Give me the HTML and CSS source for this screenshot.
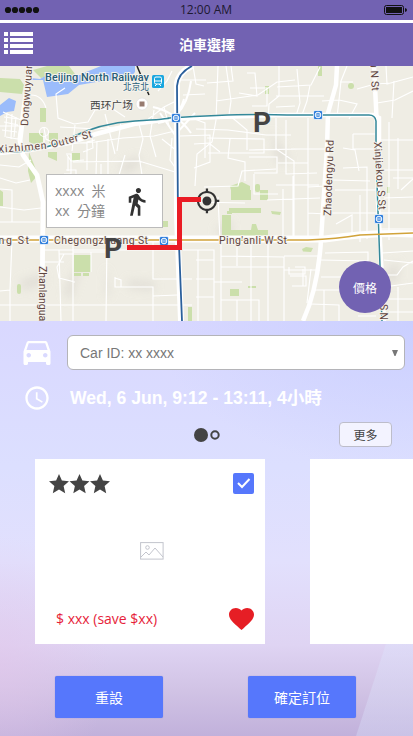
FILE: index.html
```html
<!DOCTYPE html>
<html lang="zh-Hant">
<head>
<meta charset="utf-8">
<title>泊車選擇</title>
<link rel="stylesheet" href="styles.css">
</head>
<body>
<div class="status">
  <svg class="signal" width="36" height="8" viewBox="0 0 36 8"><circle cx="4" cy="4" r="3.1"/><circle cx="11" cy="4" r="3.1"/><circle cx="18" cy="4" r="3.1"/><circle cx="25" cy="4" r="3.1"/><circle cx="32" cy="4" r="3.1"/></svg>
  <span>12:00 AM</span>
  <svg class="battery" width="24" height="10" viewBox="0 0 24 10"><rect x=".5" y=".5" width="19" height="9" rx="2" fill="none" stroke="#111"/><rect x="2" y="2" width="16" height="6"/><path d="M21 3q2 .4 2 2t-2 2z"/></svg>
</div>
<header class="nav">
  <svg class="menu" width="29" height="22" viewBox="0 0 29 22" fill="#fff"><path d="M0 0h4v4H0zM6 0h23v4H6zM0 6h4v4H0zM6 6h23v4H6zM0 12h4v4H0zM6 12h23v4H6zM0 18h4v4H0zM6 18h23v4H6z"/></svg>
  <h1>泊車選擇</h1>
</header>
<section class="map">
  <svg class="map-art" width="413" height="255" viewBox="0 66 413 255">
    <defs>
      <filter id="soft" x="-50%" y="-50%" width="200%" height="200%"><feGaussianBlur stdDeviation="5"/></filter>
      <g id="metro"><rect x="-4.5" y="-4.5" width="9" height="9" rx="1.5" fill="#2d7ddb" stroke="#fff" stroke-width=".7"/><circle r="2.8" fill="none" stroke="#fff"/><path d="M-1 -1.5v3M1 -1.5v3" stroke="#fff" stroke-width=".9"/></g>
    </defs>
    <rect y="66" width="413" height="255" fill="#efede4"/>
    <g filter="url(#soft)" fill="#d9d6cf" opacity=".65">
      <path d="M118 166l22-11v10l-15 9zM20 281l24-7v10l-22 6zM64 291l14-26 2 6-10 30zM106 265l4 28-4 6zM127 280l28 2v8l-26-2zM155 120l12-9v14z"/>
      <path d="M215 230l16-10v20zM270 130l20 30-12 4zM380 280l18-20v22z"/>
    </g>
    <g fill="#cbdfab">
      <path d="M0 78l20 1 4 6-2 9-22-2zM33 70l14-4h22l6 8-8 5-12-5-14 4zM56 66h12l2 8-8 3zM76 130h0zM29 133h14v9q-6 4-14 0zM49 133h9v10h-9zM29 152l9 23-7 8-3-12zM48 152h9v9l-9-4zM40 108h6v14h-6zM0 190l3 2v14H0z"/>
      <path d="M72 153h8v8h-8zM74 255h17v17H74zM74 273h7v3h-7zM83 273h6v3h-6zM163 221h5v6h-5zM188 307h4v14h-4z"/>
      <rect x="17" y="284" width="4" height="10" rx="2"/>
      <path d="M265 86h4v8h-4zM318 66h4v10h-4zM230 186l12-4 8 4v9h-18zM231 190h20v10h-20zM260 190h8v10h-8zM222 215h9v15h20l1-6 4 0 2 6h10v12h-46zM229 208h32v5h-32zM227 211h5v3h-5zM271 211l10 1-1 3-8-1zM302 249l4-2 7 1-2 4-8-.5zM230 289h9v7h-9zM248 286h8v2h-8zM387 187h3v6h-3z"/>
      <circle cx="351" cy="86" r="3"/><rect x="255" y="184" width="5" height="8" rx="2"/>
    </g>
    <path d="M31 78l9 1 7-4h34l5-3 15-6h34v6l-8 9-19-1-29 5-11 9-21 3-4-17-12 0zM0 105l9-7 7 3-2 10-7 1-7 4z" fill="#9bbcfb"/>
    <g fill="none" stroke="#fff" stroke-width="1.15">
      <path d="M3 112l18 8-3 19-12-2M4 117l15 2M4 122l14 3M2 130l15 2M0 126h20M7 113l-2 24M12 114l-1 25M16 117l-2 20M0 165l19 2 12-7M0 178l16 5 14-3M0 207l24 3 17-2M0 222h40M0 189l12 1v32M12 240l-2 50-10 1M10 290v31M0 305h192M44 250h133M59 250l2 71M44 262h20M64 254l-7 13 2 11 16 4M59 254h15M73 240v81M73 252h32M91 252v20M107 240l-1 81M115 277v10h38v34M153 240v39h39M115 278l6 2v7M153 296l24-1"/>
      <path d="M65 88l-9 6 2 24 16 6 14-2 7-12 18-1 12 8M60 127l37 2 45-5 22-17 14-7M64 144l31-2 28-4 31-2 21-5M44 128l2 11 14 7M75 125l-3 26M91 127l2 21-10 4M105 114l10 40M121 122l-4 29M139 124l4 15-4 16 3 20M154 110l-4 26 6 21M87 170v-28l8-2M97 141l-1 34M108 139v37M125 155l-6 20M73 162l66-1 36 11M67 175h34v-11M66 170h10v6M67 155l4 6 13-1M46 108q-4-13-15-13M164 107l5 19M158 91l9-10 5-10M162 139l15 12M172 138l-2 22 9 13M180 136l30-1v27l-16 6M192 118l13 5v35M194 144l15-1 11 9"/>
      <circle cx="44" cy="132" r="4.5"/><path d="M44 136v9M66 154h5v20h-7M68 157v14"/>
      <path d="M193 66l3 18 8 2M218 66l-2 54-4 22-15 12-2 32M181 80h25M183 95l22-1M207 83l26-2-2-15M216 101l42-6 19-13 18-2M226 66l5 35-2 14 18 15v20M247 73h8l2 23-18-3M279 66v30l-10 8-1 20M250 88h17v18h-15M277 87l34-2 9-18M297 69l3 34-4 13M310 85l-3 16-5 14M276 107l19-1M276 96h48M322 101l17-1 18 4-8 15M339 100l-2 17M340 82l13 0M347 66l-6 15-2 19M357 89l18-5 16-1M386 66l1 18 26-7M377 103l18-3 18-9M394 81l-2 37"/>
      <path d="M196 129l32 1 38 5h25M207 138l57 1v14h-56M230 139l-2 19 17 4v19M249 150l52-1M249 157h28v16h-23M276 118v31l18 12v79M286 120v54l31-1M291 149h35M308 118v122M278 163h30M204 187l34-1 4-15 34-2M195 202l50 1M218 197l2 43M254 174v20h24M276 185h43M267 200l53-2M283 189v51M293 176v64M308 213l18 1M308 187l18-1M353 134l23 0v15h-23v-15M343 148l12 2 4 21M343 168l24-1v72M333 180l37 1M335 190h43M328 213h50M336 224l16-9v23M360 195v47M389 122v118M380 140h33M382 170h31M393 178h20M384 198l29-1M381 213h32M398 138v51M401 190l12-11M381 229h32"/>
      <path d="M183 250h31v71M221 242v79M221 256l63 1v64M237 241v25M251 241v80M268 241v80M284 256h37M221 267h63M284 270h36M214 282h28M221 300h38v21M237 300v21M196 260h18M196 279h18M196 297h18M198 250v71M295 267h10v7h-16v-7M290 276h16v10h-14M303 269v17M311 269l-4 34M325 253l43-1v25M321 260l47 1M321 277h24M315 290h24M311 304l28 1v16M324 290v31M382 253l31-2M384 260l29 3M384 275l13 0 6-8 10-6M391 286l22-3M389 299h24M398 287v34M389 312h24M358 316h18"/>
    </g>
    <g fill="none" stroke="#fff">
      <path d="M30 66l-6 41-4 34 3 14 14 20 6 27-1 119" stroke-width="4.8"/>
      <path d="M0 153l30-3 39-7 27-9 38-10 35-5q60-3 118-4l86 0 6 3 0 57" stroke-width="4.5"/>
      <path d="M192 66q-13 6-15 17v133l4 105" stroke-width="6"/>
      <path d="M337 66l-1 19-8 28-1 35-6 92q-3 48-18 81" stroke-width="4.5"/>
      <path d="M374 66l3 61 1 75 6 119" stroke-width="4.5"/>
      <path d="M0 239h325q50-7 88-5" stroke-width="7"/>
      <path d="M191 81q-3 22-14 33M160 113l15 22 20-22M153 107q23 5 38 26M158 123q20-3 26-24" stroke-width="2"/>
    </g>
    <g fill="none">
      <path d="M137 66l5 12 3 8M145 86l4 9" stroke="#222" stroke-width="1.5"/>
      <path d="M0 152q40 1 70-14t65-17 34-3q78-5 118-3h82q6 0 7 6v35l6 165" stroke="#338899" stroke-width="1.5"/>
      <path d="M192 66q-14 7-15 20l1 133 4 102" stroke="#2b609c" stroke-width="1.8"/>
      <path d="M0 240h308q29-1 52-5l53-2" stroke="#d1a33a" stroke-width="1.7"/>
    </g>
    <use href="#metro" x="176" y="118"/><use href="#metro" x="318" y="115"/><use href="#metro" x="44" y="240"/><use href="#metro" x="164" y="241"/><use href="#metro" x="379" y="219"/>
    <g class="road">
      <text x="45" y="81" textLength="104" class="rail">Beijing North Railway</text>
      <text x="123" y="90" textLength="26" class="rail cjk-small">北京北</text>
      <text x="90" y="109" textLength="43" class="cjk">西环广场</text>
      <text transform="translate(28 126) rotate(-86)" textLength="63">Dongwuyuan</text>
      <text transform="translate(-2 153) rotate(-5)" textLength="49">Xizhimen</text>
      <text transform="translate(52 148) rotate(-15)" textLength="42">Outer St</text>
      <text x="-25" y="244" textLength="54">Guang St</text><text x="54" y="244" textLength="94">Chegongzhuang St</text><text x="219" y="244" textLength="68">Ping'anli W St</text>
      <text transform="translate(39 266) rotate(90)" textLength="61">Zhanlanguan</text>
      <text transform="translate(331 216) rotate(-88)" textLength="76">Zhaodengyu Rd</text>
      <text transform="translate(370 56) rotate(87)" textLength="35">ou N St</text>
      <text transform="translate(374 142) rotate(86)" textLength="68">Xinjiekou S St</text>
      <text transform="translate(380 304) rotate(90)" textLength="28">S N St</text>
    </g>
    <rect x="152" y="75" width="12" height="13" rx="1.5" fill="#1aa7df"/><rect x="154.5" y="77" width="7" height="7" rx="1.5" fill="none" stroke="#fff"/><path d="M155 81h6M155 86l2-2M161 86l-2-2" stroke="#fff"/>
    <circle cx="142" cy="104" r="6" fill="#fff" stroke="#ddd" stroke-width=".6"/><rect x="139.5" y="101.500" width="5" height="5" fill="#977b70"/>
    <g class="parking"><text x="253" y="132">P</text><text x="104" y="258">P</text></g>
    <g transform="translate(193.500 187.500) scale(1.12)" fill="#333"><path d="M12 8c-2.210 0-4 1.790-4 4s1.790 4 4 4 4-1.790 4-4-1.790-4-4-4zm8.940 3A8.994 8.994 0 0 0 13 3.060V1h-2v2.060A8.994 8.994 0 0 0 3.060 11H1v2h2.060A8.994 8.994 0 0 0 11 20.940V23h2v-2.060A8.994 8.994 0 0 0 20.940 13H23v-2h-2.060zM12 19c-3.870 0-7-3.130-7-7s3.130-7 7-7 7 3.130 7 7-3.130 7-7 7z"/></g>
    <path d="M127 247.500h52.500v-48H201" fill="none" stroke="#ea1c24" stroke-width="5"/>
  </svg>
  <div class="walk">
    <div>xxxx&nbsp; 米<br>xx&nbsp; 分鐘</div>
    <svg width="31" height="31" viewBox="0 0 24 24" fill="#333"><path d="M13.500 5.500c1.100 0 2-.9 2-2s-.9-2-2-2-2 .9-2 2 .9 2 2 2zM9.800 8.900L7 23h2.100l1.800-8 2.100 2v6h2v-7.500l-2.100-2 .6-3C14.800 12 16.800 13 19 13v-2c-1.900 0-3.500-1-4.300-2.400l-1-1.600c-.4-.6-1-1-1.700-1-.3 0-.5.1-.8.1L6 8.300V13h2V9.600l1.800-.7"/></svg>
  </div>
  <button class="price">價格</button>
</section>
<main class="panel">
  <div class="row car">
    <svg width="36" height="36" viewBox="0 0 24 24" fill="#fff"><path d="M18.920 5.010C18.720 4.420 18.160 4 17.500 4h-11c-.66 0-1.210.42-1.420 1.010L3 11v8c0 .55.450 1 1 1h1c.550 0 1-.450 1-1v-1h12v1c0 .550.450 1 1 1h1c.550 0 1-.450 1-1v-8l-2.080-5.990zM6.500 15c-.83 0-1.500-.67-1.500-1.500S5.670 12 6.500 12s1.500.67 1.500 1.500S7.330 15 6.500 15zm11 0c-.83 0-1.500-.67-1.500-1.500s.67-1.500 1.500-1.500 1.500.67 1.500 1.500-.67 1.500-1.500 1.500zM5 10l1.500-4.500h11L19 10H5z"/></svg>
    <div class="select"><span>Car ID: xx xxxx</span><svg width="6" height="6" viewBox="0 0 6 6"><path d="M0 0h6L3.500 6h-1z" fill="#777"/></svg></div>
  </div>
  <div class="row time">
    <svg width="28" height="28" viewBox="0 0 24 24" fill="#fff"><path d="M11.990 2C6.470 2 2 6.480 2 12s4.470 10 9.990 10C17.520 22 22 17.520 22 12S17.520 2 11.990 2zM12 20c-4.420 0-8-3.580-8-8s3.580-8 8-8 8 3.580 8 8-3.580 8-8 8zm.5-13H11v6l5.250 3.150.75-1.230-4.500-2.670z"/></svg>
    <span>Wed, 6 Jun, 9:12 - 13:11, 4小時</span>
  </div>
  <div class="row pager">
    <svg width="27" height="16" viewBox="0 0 27 16"><circle cx="7" cy="8" r="7" fill="#444"/><circle cx="21" cy="8" r="3.700" fill="none" stroke="#444" stroke-width="2"/></svg>
    <button class="more">更多</button>
  </div>
  <div class="cards">
    <article class="card">
      <div class="card-row">
        <svg width="61" height="20" viewBox="0 0 61 20" fill="#444"><path id="star" d="M10 0l2.900 6.600 7.100.7-5.400 4.800 1.600 7.100-6.200-3.700-6.200 3.700 1.600-7.100L0 7.300l7.100-.7z"/><use href="#star" x="20.500"/><use href="#star" x="41"/></svg>
        <svg width="21" height="21" viewBox="0 0 21 21"><rect width="21" height="21" rx="2" fill="#5677fc"/><path d="M5 10l4 4 7.500-8" fill="none" stroke="#fff" stroke-width="2"/></svg>
      </div>
      <svg class="picture" width="24" height="18" viewBox="0 0 24 18" fill="none" stroke="#c3c5cd"><rect x=".6" y=".6" width="22.500" height="16.500"/><circle cx="7.500" cy="5.500" r="1.800"/><path d="M1 15l5-5 3 3 6-7 8 9"/></svg>
      <div class="card-row bottom"><span>$ xxx (save $xx)</span>
        <svg width="25" height="22" viewBox="2 3 20 18.350" preserveAspectRatio="none" fill="#e61e25"><path d="M12 21.350l-1.450-1.320C5.400 15.360 2 12.280 2 8.500 2 5.420 4.420 3 7.500 3c1.740 0 3.410.81 4.500 2.090C13.090 3.810 14.760 3 16.500 3 19.580 3 22 5.420 22 8.500c0 3.780-3.400 6.860-8.550 11.540L12 21.350z"/></svg>
      </div>
    </article>
    <article class="card"></article>
  </div>
  <div class="actions"><button>重設</button><button>確定訂位</button></div>
</main>
</body>
</html>
```

FILE: styles.css
```css
* { box-sizing: border-box; }
body {
  margin: 0;
  width: 413px;
  height: 736px;
  overflow: hidden;
  background: #fff;
  font-family: "Liberation Sans", "Noto Sans CJK TC", sans-serif;
}
svg { display: block; flex: none; }
button { border: 0; padding: 0; font: inherit; }

.status {
  display: grid;
  grid-template-columns: 1fr auto 1fr;
  align-items: center;
  height: 20px;
  padding: 0 5px 0 4px;
  background: #7262b2;
  color: #1d1930;
  font: 12px/20px "Open Sans", sans-serif;
}
.status svg { fill: #111; }
.battery { justify-self: end; }

.nav {
  display: grid;
  grid-template-columns: 29px 1fr 29px;
  align-items: center;
  height: 43px;
  margin-top: 3px;
  padding: 0 3px 0 4px;
  background: #7262b2;
  color: #fff;
}
.menu { margin-top: -4px; }
.nav h1 { margin: 0; text-align: center; font-size: 14px; line-height: 20px; font-weight: 700; }

.map { position: relative; height: 255px; overflow: hidden; }
.road { font: 10.500px Roboto, sans-serif; fill: #5f4540; stroke: #f5f3ed; stroke-width: 2px; paint-order: stroke; }
.road .rail { fill: #265c78; font-size: 11px; font-weight: 500; }
.road .cjk-small { font: 8.700px "Noto Sans CJK SC", sans-serif; }
.road .cjk { font: 10.700px "Noto Sans CJK SC", sans-serif; fill: #444; }
.parking { font: bold 28px Roboto, sans-serif; fill: #444; }
.walk {
  position: absolute;
  left: 46px;
  top: 108px;
  width: 117px;
  height: 54px;
  display: flex;
  align-items: center;
  justify-content: space-between;
  padding: 0 10px 0 8px;
  border: 1px solid #bbb;
  background: #fff;
  color: #888;
  font: 14px/20px "Open Sans", "Noto Sans CJK TC", sans-serif;
}
.price {
  position: absolute;
  left: 339px;
  top: 195px;
  width: 52px;
  height: 52px;
  border-radius: 50%;
  background: #7262b2;
  color: #fff;
  font-size: 12px;
}

.panel {
  height: 415px;
  padding-top: 14px;
  background:
    linear-gradient(108deg, transparent 89.500%, rgba(222, 232, 255, .32) 89.700%) 0 100% / 100% 415px no-repeat,
    radial-gradient(ellipse 110px 130px at 0 345px, rgba(226, 198, 234, .6), transparent),
    radial-gradient(ellipse 260px 150px at 100% 0, rgba(190, 200, 255, .55), transparent),
    linear-gradient(#d9d8ff 0, #dcdfff 35%, #e2e0fd 58%, #dfd4f3 78%, #d1c3e5 89%, #c1b1db 100%);
}
.row { display: flex; align-items: center; }
.car { height: 35px; padding: 0 8px 0 19px; gap: 12px; }
.select {
  flex: 1;
  display: flex;
  align-items: center;
  justify-content: space-between;
  height: 35px;
  padding: 0 6px 0 12px;
  border: 1px solid #b4b4b8;
  border-radius: 6px;
  background: #fff;
  color: #777;
  font-size: 14px;
}
.time { height: 28px; margin-top: 14px; padding-left: 23px; gap: 19px; color: #fff; font-size: 17.600px; line-height: 26px; font-weight: 700; white-space: nowrap; }
.pager { justify-content: space-between; height: 25px; margin-top: 10px; padding: 0 21px 0 194px; }
.more { width: 53px; height: 25px; border: 1px solid #bdbdca; border-radius: 4px; background: #f3f3ff; color: #444; font-size: 12px; }
.cards { display: flex; gap: 45px; margin-top: 12px; padding-left: 35px; overflow: hidden; }
.card {
  flex: none;
  display: flex;
  flex-direction: column;
  justify-content: space-between;
  width: 230px;
  height: 185px;
  padding: 14px 11px 14px 14px;
  background: #fff;
}
.card-row { display: flex; align-items: center; justify-content: space-between; }
.bottom { padding-left: 7px; color: #e61e3a; font: 14px/20px "Open Sans", sans-serif; }
.picture { align-self: center; }
.actions { display: flex; gap: 85px; margin: 32px 0 0 55px; }
.actions button { width: 108px; height: 42px; border-radius: 2px; background: #5677fc; color: #fff; font-size: 14px; box-shadow: 0 0 1px #7d83c5; }
```
